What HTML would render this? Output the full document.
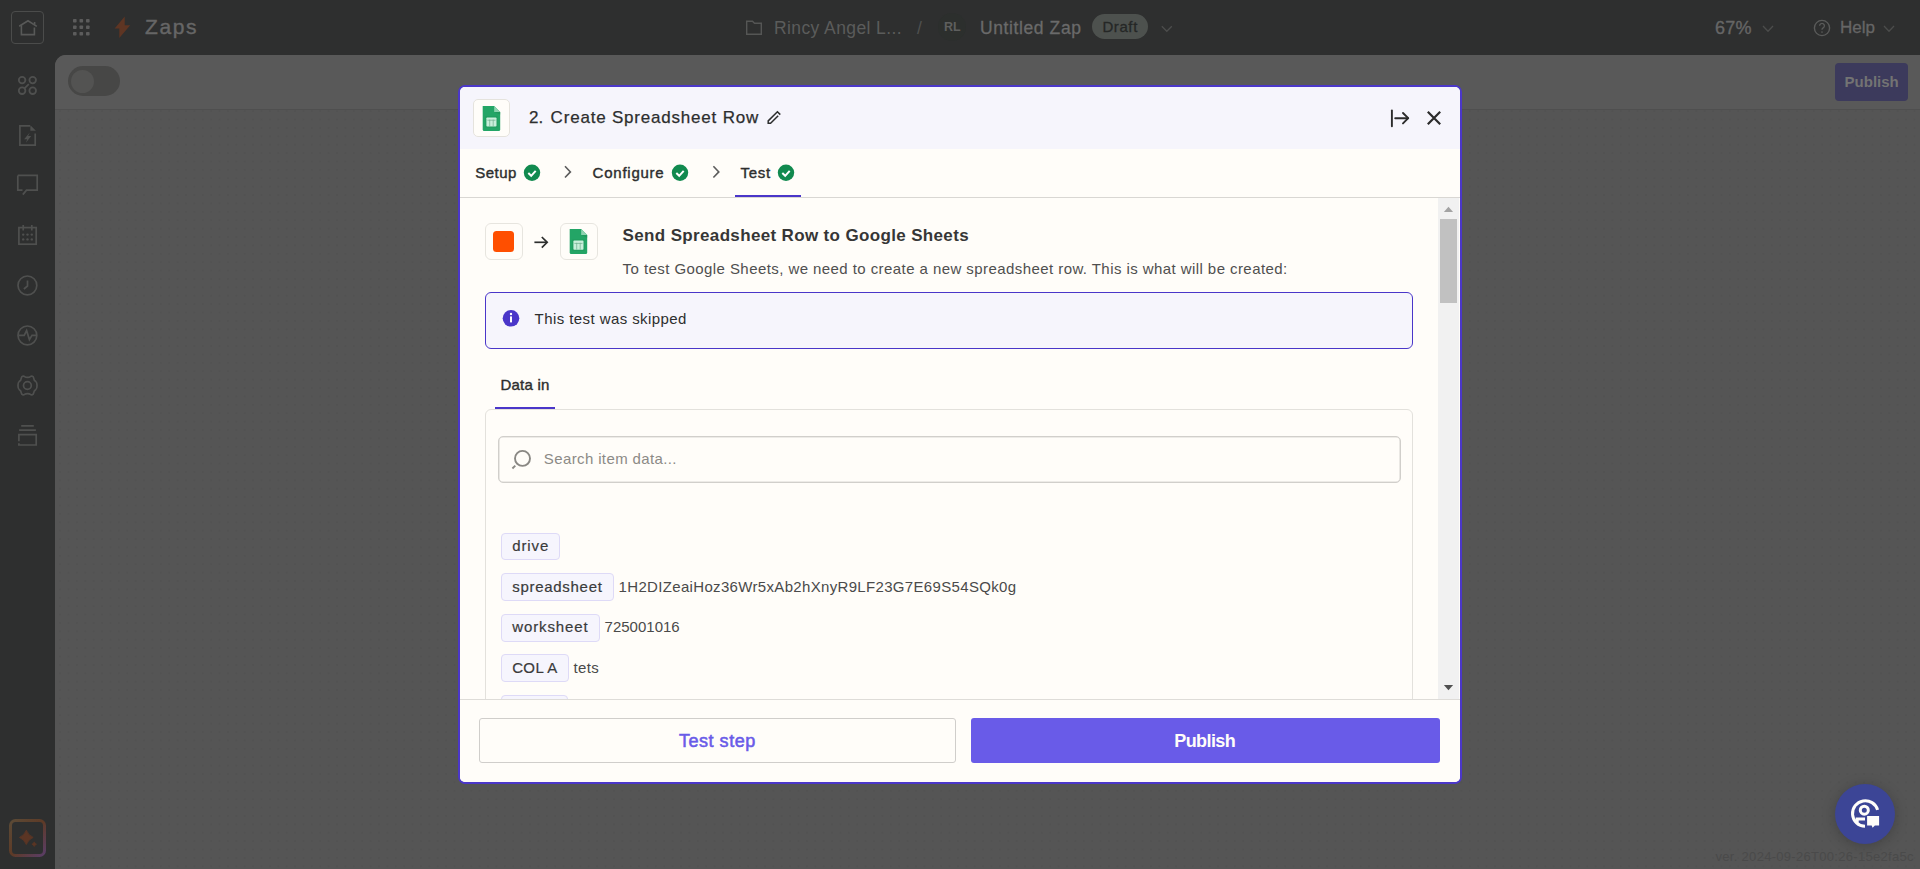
<!DOCTYPE html>
<html><head><meta charset="utf-8">
<style>
*{box-sizing:border-box;margin:0;padding:0}
html,body{width:1920px;height:869px;overflow:hidden;background:#2e2f2f;font-family:"Liberation Sans",sans-serif}
.a{position:absolute}
.t{position:absolute;white-space:nowrap;line-height:1}
svg{position:absolute;overflow:visible}
#canvas{left:55px;top:55px;width:1865px;height:814px;background-color:#555555;border-top-left-radius:11px;overflow:hidden;
 background-image:radial-gradient(circle at 1px 1px,#525252 0.8px,transparent 1.1px);background-size:8.4px 8.4px;background-position:4.2px 55.2px}
#toolbar{left:0;top:0;width:1865px;height:55px;background:#595959;border-bottom:1px solid #4f4f4f}
.sb{-webkit-text-stroke:0.4px currentColor}
.md{-webkit-text-stroke:0.2px currentColor}
.pill{border:1px solid #dedaf7;border-radius:4px;background:#f6f5fd}
#modal{left:458px;top:85px;width:1004px;height:699px;border:2px solid #4b37c9;border-radius:7px;background:#fffdf9;overflow:hidden}
</style></head><body>

<!-- TOP BAR -->
<div class="a" id="topbar" style="left:0;top:0;width:1920px;height:55px;background:#2e2f2f"></div>

<div class="a" style="left:11px;top:11px;width:33px;height:33px;border:1px solid #4b4c4b;border-radius:4px"></div>
<svg style="left:0;top:0" width="60" height="55"><g fill="none" stroke="#585958" stroke-width="1.6" stroke-linejoin="miter">
<path d="M19.2 26.3 L28 20.8 L36.8 26.4"/><path d="M21.4 25.2 V34.6 H34.4 V27.4"/><path d="M34.6 22 V24.6"/></g></svg>
<svg style="left:0;top:0" width="100" height="55"><g fill="#5c5c5c">
<rect x="73" y="19" width="3.6" height="3.6" rx="0.8"/><rect x="79.5" y="19" width="3.6" height="3.6" rx="0.8"/><rect x="86" y="19" width="3.6" height="3.6" rx="0.8"/>
<rect x="73" y="25.5" width="3.6" height="3.6" rx="0.8"/><rect x="79.5" y="25.5" width="3.6" height="3.6" rx="0.8"/><rect x="86" y="25.5" width="3.6" height="3.6" rx="0.8"/>
<rect x="73" y="32" width="3.6" height="3.6" rx="0.8"/><rect x="79.5" y="32" width="3.6" height="3.6" rx="0.8"/><rect x="86" y="32" width="3.6" height="3.6" rx="0.8"/>
</g></svg>
<svg style="left:0;top:0" width="140" height="55"><path fill="#5e3523" d="M124.7 16.6 L114.6 28.6 H119.3 V37.9 L130.2 25.2 H124.7 Z"/></svg>
<div class="t" style="left:145px;top:16.4px;font-size:21px;color:#666666;letter-spacing:1.6px;-webkit-text-stroke:0.4px #666666">Zaps</div>

<svg style="left:0;top:0" width="780" height="55"><path fill="none" stroke="#555655" stroke-width="1.4" d="M746.7 34.3 V21.3 H752.5 L754.5 23.3 H761.3 V34.3 Z"/></svg>
<div class="t" style="left:774px;top:20px;font-size:17.5px;color:#5b5c5b;letter-spacing:0.4px">Rincy Angel L...</div>
<div class="t" style="left:917px;top:20px;font-size:17.5px;color:#505150">/</div>
<div class="a" style="left:938px;top:13px;width:28px;height:28px;border-radius:50%;background:#2c2f2d"></div>
<div class="t" style="left:944px;top:21.3px;font-size:12.5px;font-weight:700;color:#5e5f5e">RL</div>
<div class="t" style="left:980px;top:19.7px;font-size:17.5px;color:#6a6a6a;letter-spacing:0.6px;-webkit-text-stroke:0.3px #6a6a6a">Untitled Zap</div>
<div class="a" style="left:1092px;top:14px;width:56px;height:25px;border-radius:13px;background:#4d514e"></div>
<div class="t" style="left:1102.4px;top:19.4px;font-size:15px;color:#252726;letter-spacing:0.6px;-webkit-text-stroke:0.3px #252726">Draft</div>
<svg style="left:0;top:0" width="1180" height="55"><path fill="none" stroke="#4c4d4c" stroke-width="1.3" d="M1161.8 26.3 L1166.8 31.3 L1171.8 26.3"/></svg>

<div class="t" style="left:1715px;top:19px;font-size:18px;color:#666666;letter-spacing:0.3px;-webkit-text-stroke:0.35px #666666">67%</div>
<svg style="left:0;top:0" width="1780" height="55"><path fill="none" stroke="#4c4d4c" stroke-width="1.3" d="M1763 26 L1768 31.2 L1773 26"/></svg>
<svg style="left:0;top:0" width="1840" height="55"><circle cx="1822" cy="28" r="7.6" fill="none" stroke="#5a5b5a" stroke-width="1.4"/>
<path d="M1819.6 25.8 a2.4 2.4 0 1 1 3.6 2.1 c-0.8 0.5 -1.2 0.9 -1.2 1.9" fill="none" stroke="#5a5b5a" stroke-width="1.3"/><circle cx="1822" cy="32" r="0.85" fill="#5a5b5a"/></svg>
<div class="t" style="left:1840px;top:19.2px;font-size:17px;color:#666666;-webkit-text-stroke:0.3px #666666">Help</div>
<svg style="left:0;top:0" width="1900" height="55"><path fill="none" stroke="#4c4d4c" stroke-width="1.3" d="M1884 26 L1889 31.2 L1894 26"/></svg>



<!-- SIDEBAR -->
<svg style="left:0;top:0" width="55" height="869"><g fill="none" stroke="#4f504f" stroke-width="1.5">
</g><g fill="none" stroke="#4f504f" stroke-width="1.8"><circle cx="22.1" cy="80.1" r="3.3"/><circle cx="32.7" cy="80.1" r="3.3"/><circle cx="22.1" cy="90.7" r="3.3"/><circle cx="32.7" cy="90.7" r="3.3"/>
<path d="M24.2 88.6 L28.8 84.2"/></g><g fill="none" stroke="#4f504f" stroke-width="1.7">
<path d="M30 125.9 H19.9 V145.1 H35.2 V133.4"/>
<path d="M17.8 175.4 H37.2 V190.2 H26.5 L22.8 194.6 M17.8 175.4 V190.2 H22.5"/>
<rect x="18.9" y="227.6" width="17.3" height="16.6"/><path d="M23.2 225 V230.4 M31.8 225 V230.4"/>
<circle cx="27.4" cy="285.4" r="9.4"/><path d="M27.5 280.4 V286 L23.9 289"/>
<circle cx="27.4" cy="335.4" r="9.4"/><path d="M18.5 335.3 H24.2 L26.6 330.6 L29.4 339.6 L32 335.3 H36"/>
<circle cx="27.4" cy="385.5" r="3.9"/>
<path d="M21.2 425.8 H33.8 M19.1 430.2 H35.9"/><path d="M18.9 441.3 V434.6 H36.2 V445 H18.9 V443.3"/>
</g>
<path fill="#4f504f" d="M30.4 125.2 L35.9 130.8 H30.4 Z"/><path fill="#4f504f" d="M29.8 132.6 L24.1 139.3 H27.2 L25.9 142.8 L31.2 136.1 H28.1 Z"/>
<g fill="#4f504f"><circle cx="23.2" cy="234.6" r="1.2"/><circle cx="27.5" cy="234.6" r="1.2"/><circle cx="31.8" cy="234.6" r="1.2"/>
<circle cx="23.2" cy="239.4" r="1.2"/><circle cx="27.5" cy="239.4" r="1.2"/><circle cx="31.8" cy="239.4" r="1.2"/></g>
<path fill="none" stroke="#4f504f" stroke-width="1.7" d="M24.6 376.6 C25.8 377.6 29.2 377.6 30.4 376.6 C31.5 375.7 33.4 376.2 33.6 377.8 C33.8 379.4 34.2 380.6 35.9 381.6 C37.4 382.6 37.4 388.4 35.9 389.4 C34.2 390.4 33.8 391.6 33.6 393.2 C33.4 394.8 31.5 395.3 30.4 394.4 C29.2 393.4 25.8 393.4 24.6 394.4 C23.5 395.3 21.6 394.8 21.4 393.2 C21.2 391.6 20.8 390.4 19.1 389.4 C17.6 388.4 17.6 382.6 19.1 381.6 C20.8 380.6 21.2 379.4 21.4 377.8 C21.6 376.2 23.5 375.7 24.6 376.6 Z"/>
<defs><linearGradient id="aig" x1="0" y1="0" x2="1" y2="1"><stop offset="0" stop-color="#5b4a36"/><stop offset="0.5" stop-color="#5e3a26"/><stop offset="1" stop-color="#5a3d66"/></linearGradient></defs>
<rect x="10.5" y="820.5" width="34" height="35" rx="5" fill="none" stroke="url(#aig)" stroke-width="3"/>
<path fill="#5b3524" stroke="#5b3524" stroke-width="0.8" stroke-linejoin="round" d="M26.3 830.2 Q28.4 835.4 33.2 837.4 Q28.4 839.4 26.3 844.6 Q24.2 839.4 19.4 837.4 Q24.2 835.4 26.3 830.2 Z"/>
<path fill="#5b3524" stroke="#5b3524" stroke-width="0.6" stroke-linejoin="round" d="M34.2 841.8 Q34.9 843.5 36.6 844.2 Q34.9 844.9 34.2 846.6 Q33.5 844.9 31.8 844.2 Q33.5 843.5 34.2 841.8 Z"/>
</svg>

<!-- CANVAS -->
<div class="a" id="canvas">
  <div class="a" id="toolbar"></div>
  <div class="a" style="left:13px;top:10.8px;width:52px;height:30px;border-radius:15px;background:#474746"></div>
  <div class="a" style="left:15.8px;top:14.8px;width:23px;height:23px;border-radius:50%;background:#535352"></div>
  <div class="a" style="left:1780px;top:8px;width:73px;height:38px;border-radius:4px;background:#3c3a5c"></div>
  <div class="t" style="left:1789.6px;top:19.3px;font-size:15px;font-weight:700;color:#737373">Publish</div>
</div>
<div class="a" style="left:1835px;top:784px;width:60px;height:60px;border-radius:50%;background:#3c4596;box-shadow:0 2px 14px rgba(0,0,0,0.22)"></div>
<svg style="left:0;top:0" width="1920" height="869"><g fill="none" stroke="#fffdf9" stroke-width="3">
<path d="M1877.6 809.9 A12.8 12.8 0 1 0 1865 826.3"/><circle cx="1864.3" cy="810.2" r="4"/><path d="M1865 818.9 H1857.2 V822.8"/></g>
<path fill="#fffdf9" d="M1867.1 815.9 H1879.1 V825.4 H1874.9 L1872.6 827.8 L1871.7 825.4 H1867.1 Z"/></svg>
<div class="t" style="left:1715.5px;top:850px;font-size:13px;color:#4a4a4a;letter-spacing:0.3px">ver. 2024-09-26T00:26-15e2fa5c</div>


<!-- MODAL -->
<div class="a" id="modal">
  <div class="a" id="mhead" style="left:0;top:0;width:1000px;height:62px;background:#f6f5fc"></div>
  <div class="a" style="left:13px;top:12px;width:37px;height:38px;border:1px solid #e5e3dd;border-radius:5px;background:#fffdf9"></div>
  <div class="t" style="left:69px;top:22.2px;font-size:17px;color:#2d2e2e;-webkit-text-stroke:0.25px #2d2e2e">2.</div>
  <div class="t" style="left:90.6px;top:22.2px;font-size:17px;color:#2d2e2e;letter-spacing:0.8px;-webkit-text-stroke:0.25px #2d2e2e">Create Spreadsheet Row</div>

  <!-- tabs -->
  <div class="t sb" style="left:15.2px;top:77.6px;font-size:15px;color:#2d2e2e;letter-spacing:0.5px">Setup</div>
  <div class="t sb" style="left:132.6px;top:77.6px;font-size:15px;color:#2d2e2e;letter-spacing:0.76px">Configure</div>
  <div class="t sb" style="left:280.4px;top:77.6px;font-size:15px;color:#2d2e2e;letter-spacing:0.77px">Test</div>
  <div class="a" style="left:0;top:110px;width:1000px;height:1px;background:#d9d7d3"></div>
  <div class="a" style="left:275px;top:107.6px;width:66px;height:2.5px;background:#4a36c9"></div>

  <!-- content -->
  <div class="a" style="left:25px;top:136px;width:38px;height:37px;border:1px solid #e7e5df;border-radius:6px;background:#fffdf9"></div>
  <div class="a" style="left:33px;top:144px;width:21px;height:21px;border-radius:3.5px;background:#ff4f00"></div>
  <div class="a" style="left:100px;top:136px;width:38px;height:37px;border:1px solid #e7e5df;border-radius:6px;background:#fffdf9"></div>
  <div class="t" style="left:162.6px;top:140.2px;font-size:17px;font-weight:700;color:#363636;letter-spacing:0.35px">Send Spreadsheet Row to Google Sheets</div>
  <div class="t" style="left:162.6px;top:174.3px;font-size:15px;color:#4f4f4f;letter-spacing:0.43px">To test Google Sheets, we need to create a new spreadsheet row. This is what will be created:</div>

  <div class="a" style="left:25px;top:205px;width:928px;height:57px;border:1px solid #4a36c9;border-radius:6px;background:#f6f5fc"></div>
  <div class="t" style="left:74.6px;top:224px;font-size:15px;color:#2d2e2e;letter-spacing:0.42px">This test was skipped</div>

  <div class="t sb" style="left:40.4px;top:289.9px;font-size:15px;color:#2d2e2e;letter-spacing:0.25px">Data in</div>
  <div class="a" style="left:25px;top:322px;width:928px;height:320px;border:1px solid #e3e1dc;border-radius:6px"></div>
  <div class="a" style="left:35px;top:319.7px;width:60px;height:2.2px;background:#4a36c9"></div>
  <div class="a" style="left:38px;top:349px;width:903px;height:47px;border:1px solid #d1cfcb;border-radius:5px;background:#fffdf9;box-shadow:inset 0 0 0 0.6px #dcdad6"></div>
  <div class="t" style="left:83.8px;top:363.9px;font-size:15px;color:#8c8a86;letter-spacing:0.38px">Search item data...</div>

  <div class="a pill" style="left:41px;top:445.5px;width:59px;height:27.5px"></div>
  <div class="t md" style="left:52.2px;top:450.8px;font-size:15px;color:#3a3b3b;letter-spacing:0.9px">drive</div>
  <div class="a pill" style="left:41px;top:486.1px;width:112.5px;height:27.5px"></div>
  <div class="t md" style="left:52.2px;top:492.2px;font-size:15px;color:#3a3b3b;letter-spacing:0.71px">spreadsheet</div>
  <div class="t" style="left:158.6px;top:492.2px;font-size:15px;color:#4a4a4a;letter-spacing:0.33px">1H2DIZeaiHoz36Wr5xAb2hXnyR9LF23G7E69S54SQk0g</div>
  <div class="a pill" style="left:41px;top:527.2px;width:98.5px;height:27.5px"></div>
  <div class="t md" style="left:52.2px;top:532.3px;font-size:15px;color:#3a3b3b;letter-spacing:0.9px">worksheet</div>
  <div class="t" style="left:144.6px;top:532.3px;font-size:15px;color:#4a4a4a">725001016</div>
  <div class="a pill" style="left:41px;top:567.3px;width:67.5px;height:28.2px"></div>
  <div class="t md" style="left:52.2px;top:573.4px;font-size:15px;color:#3a3b3b;letter-spacing:0.35px">COL A</div>
  <div class="t" style="left:113.6px;top:573.4px;font-size:15px;color:#4a4a4a;letter-spacing:0.3px">tets</div>
  <div class="a pill" style="left:41px;top:608px;width:67px;height:27.5px"></div>

  <!-- scrollbar -->
  <div class="a" style="left:978px;top:111px;width:21px;height:501px;background:#f1f1f1"></div>
  <div class="a" style="left:980px;top:132.2px;width:17px;height:84.3px;background:#c1c1c1"></div>

  <!-- footer -->
  <div class="a" style="left:0;top:612px;width:1000px;height:83px;background:#fffdf9;border-top:1px solid #dedcd8"></div>
  <div class="a" style="left:19px;top:631px;width:477px;height:45px;border:1px solid #d0cecb;border-radius:3px"></div>
  <div class="t" style="left:219px;top:644.8px;font-size:18px;color:#695be8;letter-spacing:0.52px;-webkit-text-stroke:0.55px #695be8">Test step</div>
  <div class="a" style="left:511px;top:631px;width:469px;height:45px;border-radius:3px;background:#695be8"></div>
  <div class="t" style="left:714.3px;top:644.8px;font-size:18px;font-weight:700;color:#fffdf9;letter-spacing:-0.6px">Publish</div>
</div>

<svg style="left:0;top:0" width="1920" height="869">
  <!-- sheets icon header -->
  <g id="sheets">
    <path fill="#23a566" d="M482.7 105.9 H494.2 L500.2 111.9 V129.4 Q500.2 130.9 498.7 130.9 H484.2 Q482.7 130.9 482.7 129.4 Z"/>
    <path fill="#8dd3b0" d="M494.2 105.9 L500.2 111.9 H494.2 Z"/>
    <path fill="#1c8f56" d="M494.2 111.9 H500.2 V114.6 Z" opacity="0.6"/>
    <rect x="485.2" y="116.2" width="12.4" height="11.4" fill="#1f9a5d" opacity="0.7"/>
    <rect x="486.4" y="117.4" width="10.1" height="9.1" rx="0.8" fill="#c8efdb"/>
    <path stroke="#6fae8e" stroke-width="0.7" d="M489.7 119.6 V126.5 M493.2 119.6 V126.5 M487.4 120.2 H495.5"/>
  </g>
  <use href="#sheets" transform="translate(87,123.2)"/>
  <!-- pencil -->
  <path fill="none" stroke="#2d2e2e" stroke-width="1.5" stroke-linejoin="miter" d="M780.3 114.6 L777.4 111.7 L768.2 120.9 V123.3 H770.6 L778.2 115.7"/>
  <!-- collapse & close -->
  <g fill="none" stroke="#2b2b2b" stroke-width="1.9" stroke-linecap="round">
    <path d="M1391.9 110.4 V126.2"/><path d="M1395.2 118.2 H1408"/><path d="M1403 113 L1408.2 118.2 L1403 123.4" stroke-linejoin="round" stroke-linecap="round"/>
  </g>
  <g stroke="#2b2b2b" stroke-width="2.2"><path d="M1427.8 111.8 L1440.2 124.2 M1440.2 111.8 L1427.8 124.2"/></g>
  <!-- checks -->
  <g id="chk"><circle cx="532" cy="172.8" r="8.2" fill="#118a4f"/><path fill="none" stroke="#fff" stroke-width="2" d="M528.3 173 L531.2 175.8 L535.7 170.8"/></g>
  <use href="#chk" transform="translate(148,0)"/>
  <use href="#chk" transform="translate(254,0)"/>
  <g fill="none" stroke="#5c5c5c" stroke-width="1.6"><path d="M565 166.3 L570.4 171.9 L565 177.5"/><path d="M713.4 166.3 L718.8 171.9 L713.4 177.5"/></g>
  <!-- arrow between icons -->
  <g fill="none" stroke="#2d2e2e" stroke-width="1.7"><path d="M534.4 242.3 H547"/><path d="M541.8 237 L547.2 242.3 L541.8 247.6"/></g>
  <!-- info icon -->
  <circle cx="511" cy="318.3" r="8.3" fill="#4a36c9"/>
  <rect x="510" y="316.4" width="2" height="6" fill="#fff"/><circle cx="511" cy="314" r="1.2" fill="#fff"/>
  <!-- search -->
  <g fill="none" stroke="#8a8884" stroke-width="1.9"><circle cx="522.5" cy="458.4" r="7.5"/><path d="M515.3 465.6 L512.4 468.5"/></g>
  <!-- scroll arrows -->
  <path fill="#a3a3a3" d="M1443.9 212 L1448.5 206.8 L1453.1 212 Z"/>
  <path fill="#505050" d="M1443.9 685 L1448.5 690.2 L1453.1 685 Z"/>
</svg>
</body></html>
